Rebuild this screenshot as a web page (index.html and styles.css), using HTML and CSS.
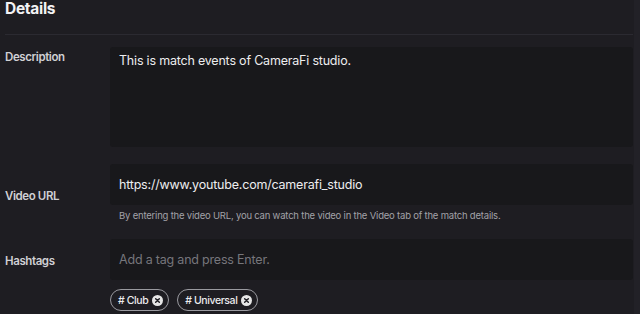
FILE: index.html
```html
<!DOCTYPE html>
<html>
<head>
<meta charset="utf-8">
<link rel="stylesheet" href="styles.css">
</head>
<body>
<div class="panel">
  <h2 class="title">Details</h2>
  <div class="row row-desc">
    <div class="label">Description</div>
    <div class="field">
      <div class="textarea">This is match events of CameraFi studio.</div>
    </div>
  </div>
  <div class="row row-url">
    <div class="label">Video URL</div>
    <div class="field">
      <div class="input">https://www.youtube.com/camerafi_studio</div>
      <div class="help">By entering the video URL, you can watch the video in the Video tab of the match details.</div>
    </div>
  </div>
  <div class="row row-tags">
    <div class="label">Hashtags</div>
    <div class="field">
      <div class="input placeholder">Add a tag and press Enter.</div>
      <div class="tags">
        <span class="tag"># Club <svg class="x" viewBox="0 0 12 12"><circle cx="6" cy="6" r="6" fill="#e6e6e6"/><path d="M4 4L8 8M8 4L4 8" stroke="#1e1d22" stroke-width="1.6" stroke-linecap="round"/></svg></span>
        <span class="tag"># Universal <svg class="x" viewBox="0 0 12 12"><circle cx="6" cy="6" r="6" fill="#e6e6e6"/><path d="M4 4L8 8M8 4L4 8" stroke="#1e1d22" stroke-width="1.6" stroke-linecap="round"/></svg></span>
      </div>
    </div>
  </div>
</div>
</body>
</html>
```

FILE: styles.css
```css
* { box-sizing: border-box; }
html, body { margin: 0; padding: 0; }
body {
  background: #222127;
  font-family: Inter, "Noto Sans", sans-serif;
  color: #e8e8ea;
  height: 314px;
  overflow: hidden;
}
.panel {
  width: 634px;
  height: 314px;
  background: #1e1d22;
  padding: 0 1px 0 5px;
}
.title {
  margin: 0;
  font-size: 15.5px;
  line-height: 18px;
  font-weight: 700;
  letter-spacing: -0.3px;
  color: #f2f2f4;
  padding-bottom: 16px;
  border-bottom: 1px solid #2b2a31;
}
.row {
  display: grid;
  grid-template-columns: 105px 1fr;
}
.row-desc { margin-top: 12px; }
.row-url { margin-top: 17px; }
.row-tags { margin-top: 16px; }
.label {
  font-size: 11.5px;
  line-height: 16px;
  font-weight: 600;
  letter-spacing: -0.4px;
  color: #d0d0d4;
}
.row-desc .label { padding-top: 2px; }
.row-url .label { padding-top: 24px; }
.row-tags .label { padding-top: 14px; }
.textarea {
  background: #18181b;
  height: 100px;
  border-radius: 3px;
  padding: 4px 9px;
  font-size: 12.5px;
  line-height: 20px;
  letter-spacing: -0.2px;
  color: #ededef;
}
.input {
  background: #18181b;
  height: 41px;
  border-radius: 3px;
  padding: 0 9px;
  font-size: 12.5px;
  line-height: 41px;
  letter-spacing: -0.2px;
  color: #ededef;
}
.input.placeholder { color: #76767c; }
.help {
  margin-top: 4px;
  padding-left: 9px;
  font-size: 9.5px;
  line-height: 14px;
  letter-spacing: -0.2px;
  color: #a2a2a8;
}
.tags {
  display: flex;
  gap: 8px;
  margin-top: 9px;
}
.tag {
  display: inline-flex;
  align-items: center;
  gap: 4px;
  height: 22px;
  padding: 0 5px 0 7px;
  border: 1px solid #9a9aa0;
  border-radius: 11px;
  font-size: 10.5px;
  font-weight: 500;
  letter-spacing: -0.4px;
  color: #ececee;
}
.x { width: 11px; height: 11px; }
```
